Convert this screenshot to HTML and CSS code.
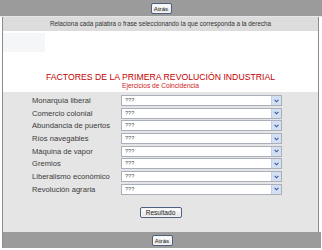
FILE: index.html
```html
<!DOCTYPE html>
<html lang="es">
<head>
<meta charset="utf-8">
<title>Factores de la Primera Revolución Industrial</title>
<link rel="stylesheet" href="styles.css">
</head>
<body>
<div class="page">
  <div class="bar bar-top"><button class="btn" type="button">Atrás</button></div>
  <div class="frame">
    <div class="instr">Relaciona cada palabra o frase seleccionando la que corresponda a la derecha</div>
    <div class="hero">
      <div class="ph"></div>
      <h1 class="title">FACTORES DE LA PRIMERA REVOLUCIÓN INDUSTRIAL</h1>
      <div class="subtitle">Ejercicios de Coincidencia</div>
    </div>
    <div class="form">
      <div class="rows">
        <label class="lbl">Monarquía liberal</label>
        <div class="sel"><span class="val">???</span><span class="arr"><svg width="5" height="4" viewBox="0 0 5 4"><path d="M0.6 0.8 L2.5 2.8 L4.4 0.8" fill="none" stroke="#3a5a96" stroke-width="1.1"/></svg></span></div>
        <label class="lbl">Comercio colonial</label>
        <div class="sel"><span class="val">???</span><span class="arr"><svg width="5" height="4" viewBox="0 0 5 4"><path d="M0.6 0.8 L2.5 2.8 L4.4 0.8" fill="none" stroke="#3a5a96" stroke-width="1.1"/></svg></span></div>
        <label class="lbl">Abundancia de puertos</label>
        <div class="sel"><span class="val">???</span><span class="arr"><svg width="5" height="4" viewBox="0 0 5 4"><path d="M0.6 0.8 L2.5 2.8 L4.4 0.8" fill="none" stroke="#3a5a96" stroke-width="1.1"/></svg></span></div>
        <label class="lbl">Ríos navegables</label>
        <div class="sel"><span class="val">???</span><span class="arr"><svg width="5" height="4" viewBox="0 0 5 4"><path d="M0.6 0.8 L2.5 2.8 L4.4 0.8" fill="none" stroke="#3a5a96" stroke-width="1.1"/></svg></span></div>
        <label class="lbl">Máquina de vapor</label>
        <div class="sel"><span class="val">???</span><span class="arr"><svg width="5" height="4" viewBox="0 0 5 4"><path d="M0.6 0.8 L2.5 2.8 L4.4 0.8" fill="none" stroke="#3a5a96" stroke-width="1.1"/></svg></span></div>
        <label class="lbl">Gremios</label>
        <div class="sel"><span class="val">???</span><span class="arr"><svg width="5" height="4" viewBox="0 0 5 4"><path d="M0.6 0.8 L2.5 2.8 L4.4 0.8" fill="none" stroke="#3a5a96" stroke-width="1.1"/></svg></span></div>
        <label class="lbl">Liberalismo económico</label>
        <div class="sel"><span class="val">???</span><span class="arr"><svg width="5" height="4" viewBox="0 0 5 4"><path d="M0.6 0.8 L2.5 2.8 L4.4 0.8" fill="none" stroke="#3a5a96" stroke-width="1.1"/></svg></span></div>
        <label class="lbl">Revolución agraria</label>
        <div class="sel"><span class="val">???</span><span class="arr"><svg width="5" height="4" viewBox="0 0 5 4"><path d="M0.6 0.8 L2.5 2.8 L4.4 0.8" fill="none" stroke="#3a5a96" stroke-width="1.1"/></svg></span></div>
      </div>
      <div class="actions"><button class="btn btn-wide" type="button">Resultado</button></div>
    </div>
    <div class="bar bar-bottom"><button class="btn" type="button">Atrás</button></div>
  </div>
</div>
</body>
</html>
```

FILE: styles.css
```css
* { box-sizing: border-box; }
html, body { margin: 0; padding: 0; background: #ffffff; }
body { font-family: "Liberation Sans", Arial, sans-serif; color: #333333; }

.page { width: 322px; height: 250px; overflow: hidden; }

.bar {
  display: flex;
  align-items: center;
  justify-content: center;
  background: #9b9b9b;
}
.bar-top { height: 17px; border-bottom: 1px solid #e6e6e6; }
.bar-bottom { height: 16px; margin-right: -3px; }

.btn {
  font-family: "Liberation Sans", Arial, sans-serif;
  font-size: 6.2px;
  color: #222;
  height: 11px;
  width: 21px;
  padding: 0;
  line-height: 9px;
  border: 1px solid #4e5f80;
  border-radius: 2px;
  background: linear-gradient(#ffffff, #e4e4e4);
  box-shadow: inset 0 0 0 1px #f4f4f4;
}
.btn-wide { width: 42px; font-size: 6.6px; }

.frame {
  margin: 0 3px 0 2px;
  border-left: 1px solid #8c8c8c;
  border-right: 1px solid #8c8c8c;
}

.instr {
  height: 14px;
  background: #dcdcdc;
  font-size: 6.3px;
  line-height: 14px;
  text-align: center;
  color: #333;
}

.hero {
  height: 61px;
  background: #ffffff;
  display: flex;
  flex-direction: column;
  align-items: center;
  padding-top: 2px;
}
.ph {
  align-self: flex-start;
  width: 42px;
  height: 19px;
  background: #f5f6f8;
}
.title {
  margin: 20px 0 0 0;
  font-size: 8.7px;
  line-height: 10px;
  font-weight: normal;
  color: #c40000;
}
.subtitle {
  font-size: 6.6px;
  line-height: 8px;
  color: #cc2222;
}

.form {
  height: 140px;
  background: #e5e5e5;
  padding-top: 3px;
}
.rows {
  display: grid;
  grid-template-columns: 89px 161px;
  row-gap: 1.7px;
  padding-left: 29px;
}
.lbl {
  font-size: 7.6px;
  line-height: 11px;
  color: #3a3a3a;
  white-space: nowrap;
}
.sel {
  display: flex;
  height: 11px;
  background: #ffffff;
  border: 1px solid #a9b0bc;
}
.val {
  flex: 1;
  font-size: 5.6px;
  line-height: 9px;
  padding-left: 3px;
  color: #555;
}
.arr {
  width: 10px;
  display: flex;
  align-items: center;
  justify-content: center;
  background: #d3dff2;
  border-left: 1px solid #c2cfe4;
}

.actions {
  display: flex;
  justify-content: center;
  padding-top: 12px;
}
```
